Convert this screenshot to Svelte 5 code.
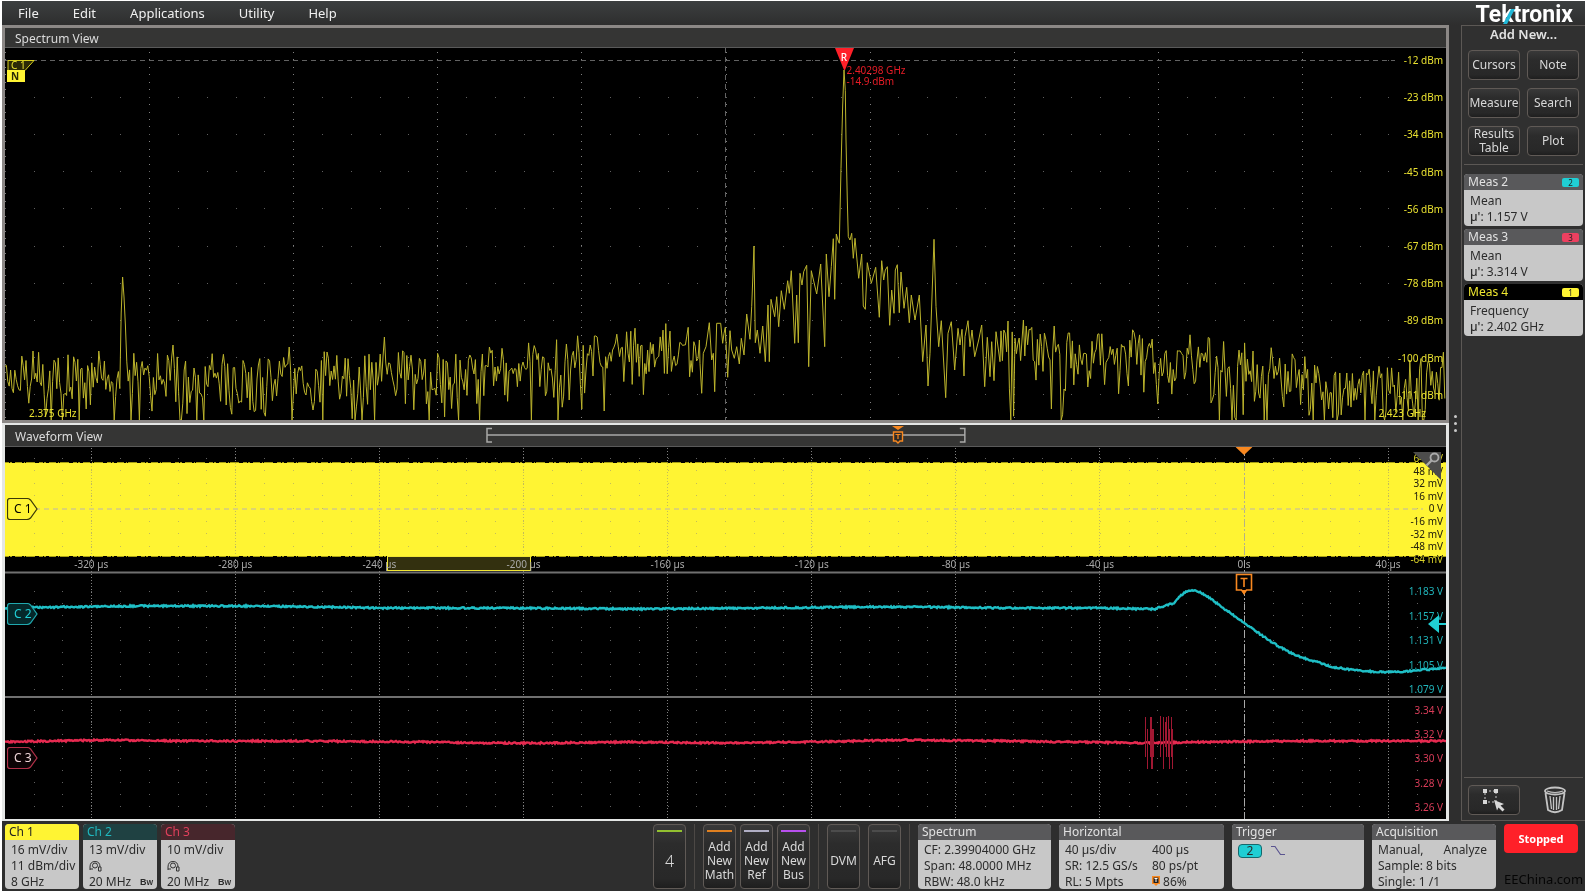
<script lang="ts">
	type Point = [number, number];

	const PLOT_W = 1441;
	const PLOT_H = 372;
	const DIV = 144.1;
	const ZERO_X = 1239;

	const menus = ['File', 'Edit', 'Applications', 'Utility', 'Help'];
	const tools = ['Cursors', 'Note', 'Measure', 'Search', 'Results Table', 'Plot'];

	const measurements = [
		{ title: 'Meas 2', source: '2', kind: 'Mean', value: '1.157 V', color: '#20ced4', active: false },
		{ title: 'Meas 3', source: '3', kind: 'Mean', value: '3.314 V', color: '#ee4060', active: false },
		{ title: 'Meas 4', source: '1', kind: 'Frequency', value: '2.402 GHz', color: '#fff433', active: true }
	];

	const channels = [
		{ name: 'Ch 1', tone: 'ch1', lines: ['16 mV/div', '11 dBm/div', '8 GHz'], probe: false },
		{ name: 'Ch 2', tone: 'ch2', lines: ['13 mV/div', '', '20 MHz'], probe: true },
		{ name: 'Ch 3', tone: 'ch3', lines: ['10 mV/div', '', '20 MHz'], probe: true }
	];

	const adders = [
		{ label: 'Add New Math', color: '#e08020' },
		{ label: 'Add New Ref', color: '#b0aec4' },
		{ label: 'Add New Bus', color: '#b850ee' }
	];

	const dbmLabels = Array.from({ length: 10 }, (_, i) => ({
		text: `${[-12, -23, -34, -45, -56, -67, -78, -89, -100, -111][i]} dBm`,
		y: 12 + i * 37.2
	}));

	const timeLabels = Array.from({ length: 10 }, (_, i) => {
		const t = -320 + i * 40;
		return { text: t === 0 ? '0 s' : `${t} µs`, x: ZERO_X + (t / 40) * DIV };
	});

	const ch1Labels = [64, 48, 32, 16, 0, -16, -32, -48, -64].map((v, i) => ({
		text: v === 0 ? '0 V' : `${v} mV`,
		y: 11 + i * 12.6
	}));
	const ch2Labels = ['1.183', '1.157', '1.131', '1.105', '1.079'].map((v, i) => ({
		text: `${v} V`,
		y: 144 + i * 24.5
	}));
	const ch3Labels = ['3.34', '3.32', '3.30', '3.28', '3.26'].map((v, i) => ({
		text: `${v} V`,
		y: 263 + i * 24.2
	}));

	const flags = [
		{ name: 'C 1', y: 62, color: '#3b3808', fill: '#fff433', text: '#000' },
		{ name: 'C 2', y: 167, color: '#20a8ae', fill: '#05282a', text: '#20ced4' },
		{ name: 'C 3', y: 311, color: '#b03048', fill: '#0c0305', text: '#f0d4d8' }
	];

	const bandRows = Array.from({ length: 7 }, (_, i) => 23.6 + i * 12.6);
	const laneRows = [
		11,
		...Array.from({ length: 9 }, (_, i) => 144 + i * 12.25),
		...Array.from({ length: 9 }, (_, i) => 263 + i * 12.1)
	];

	// Small seeded generator, so the noise is the same on each load
	function random(seed: number) {
		let s = seed;
		return () => {
			s = (s * 1664525 + 1013904223) % 4294967296;
			return (s + 1) / 4294967297;
		};
	}

	function level(points: Point[], x: number) {
		for (let i = 1; i < points.length; i++) {
			const [x0, y0] = points[i - 1];
			const [x1, y1] = points[i];
			if (x <= x1) return y0 + ((y1 - y0) * (x - x0)) / (x1 - x0);
		}
		return points[points.length - 1][1];
	}

	function toPath(points: Point[]) {
		return 'M' + points.map(([x, y]) => `${x.toFixed(1)} ${y.toFixed(1)}`).join('L');
	}

	// Carrier and its skirts, three units to a pixel from (695, -8)
	const carrier: Point[] = [
		[0, 970], [5, 1060], [10, 940], [18, 920], [28, 848], [35, 960], [40, 940], [44, 1055], [50, 850],
		[62, 850], [68, 910], [72, 880], [76, 862], [83, 1012], [90, 872], [95, 930], [103, 955], [110, 920],
		[118, 972], [124, 895], [132, 945], [140, 822], [150, 898], [155, 800], [162, 618], [166, 908],
		[172, 870], [180, 940], [188, 858], [196, 965], [204, 795], [208, 965], [213, 778], [224, 830],
		[230, 770], [236, 860], [244, 752], [253, 808], [263, 722], [268, 760], [274, 692], [284, 910],
		[290, 765], [295, 908], [300, 700], [306, 735], [311, 695], [320, 676], [326, 980], [334, 692],
		[350, 762], [362, 672], [374, 920], [379, 642], [387, 770], [394, 680], [400, 596], [404, 778],
		[409, 582], [414, 600], [418, 610], [423, 385], [428, 195], [432, 90], [436, 152], [438, 300],
		[442, 480], [445, 590], [450, 600], [455, 580], [460, 655], [465, 595], [476, 715], [485, 642],
		[490, 798], [496, 808], [502, 668], [514, 730], [527, 682], [538, 832], [545, 662], [551, 720],
		[556, 690], [562, 680], [569, 856], [575, 750], [582, 820], [586, 690], [592, 674], [598, 818],
		[603, 696], [612, 805], [620, 742], [628, 848], [634, 765], [645, 840], [658, 765], [668, 965],
		[678, 855], [684, 1038], [690, 940], [702, 598], [708, 800], [716, 920], [724, 842], [737, 1073],
		[744, 880], [754, 845], [764, 990], [774, 865], [780, 915], [786, 868], [792, 1008], [795, 890],
		[804, 842], [810, 920], [816, 870], [824, 950], [836, 900], [845, 855], [854, 1040], [862, 892],
		[870, 1010], [875, 905], [882, 1022], [888, 875], [900, 965]
	];

	const floor: Point[] = [
		[0, 328], [200, 330], [400, 323], [500, 316], [600, 306], [695, 296],
		[995, 292], [1080, 302], [1180, 310], [1260, 322], [1320, 338], [1441, 328]
	];

	const spurs: Point[] = [
		[28, 303], [94, 303], [118, 229], [168, 297], [284, 299], [379, 289],
		[484, 299], [590, 288], [1018, 272], [1049, 278], [1064, 285]
	];

	function spectrum() {
		const rnd = random(2402);
		const out: Point[] = [];
		const noise = (from: number, to: number) => {
			for (let x = from; x < to; x += 1.4) {
				const db = 10 * Math.log10(-Math.log(rnd()));
				let y = level(floor, x) - db * 3.8;
				y = Math.max(y, level(floor, x) - 24);
				for (const [px, py] of spurs) {
					const d = Math.abs(x - px);
					if (d < 0.8) y = py;
					else if (d < 2.5) y = Math.min(y, py + d * 20);
				}
				out.push([x, Math.min(y, PLOT_H)]);
			}
		};
		noise(0, 695);
		for (const [x, y] of carrier) out.push([695 + x / 3, y / 3 - 8]);
		noise(996, PLOT_W);
		return toPath(out);
	}

	function trace(points: Point[], seed: number) {
		const rnd = random(seed);
		const out: Point[] = [];
		for (let x = 0; x <= PLOT_W; x += 1) {
			out.push([x, level(points, x) + (rnd() - 0.5) * 1.6]);
		}
		return toPath(out);
	}

	const spectrumPath = spectrum();

	const ch2Path = trace(
		[
			[0, 161], [60, 160], [130, 159], [250, 159], [380, 161], [500, 161], [640, 162], [760, 161],
			[850, 160], [920, 160], [1000, 161], [1095, 161], [1138, 162], [1150, 162], [1162, 158], [1169, 156],
			[1175, 149], [1180, 145], [1187, 143], [1195, 145], [1205, 151], [1218, 161], [1228, 168], [1239, 176],
			[1255, 187], [1268, 196], [1282, 204], [1295, 210], [1312, 215], [1328, 220], [1348, 223],
			[1372, 225], [1395, 225], [1415, 223], [1441, 221]
		],
		7
	);

	const ch3Path = trace(
		[
			[0, 295], [50, 294], [100, 293], [180, 294], [300, 294], [420, 295], [480, 296], [540, 296], [620, 295],
			[720, 296], [800, 295], [900, 293], [1000, 294], [1140, 296], [1200, 295], [1300, 294], [1441, 294]
		],
		11
	);

	const bursts = [
		[1140, 270, 310], [1142, 282, 322], [1145, 270, 310], [1146, 270, 322], [1147, 282, 322],
		[1148, 282, 310], [1155, 269, 310], [1158, 270, 322], [1160, 275, 300], [1161, 270, 310],
		[1163, 269, 310], [1164, 282, 322], [1166, 270, 310], [1167, 282, 322]
	];

	const pctX = (x: number) => `${(x / PLOT_W) * 100}%`;
	const pctY = (y: number) => `${(y / PLOT_H) * 100}%`;
</script>

<div class="scope">
	<header class="menubar">
		<nav>
			{#each menus as item}
				<button class="menu">{item}</button>
			{/each}
		</nav>
		<div class="logo">
			Te<span class="logo-k">k<svg viewBox="0 0 12 16" aria-hidden="true"><path d="M0 16L8 1H12L4 16Z" fill="#20b8d8" /></svg></span>tronix
		</div>
	</header>

	<div class="workspace">
		<main>
			<section class="panel spectrum">
				<h2>Spectrum View</h2>
				<div class="plot">
					<svg class="graph" viewBox="0 0 {PLOT_W} {PLOT_H}" preserveAspectRatio="none" aria-hidden="true">
						<g class="grid">
							{#each Array(10) as _, i}
								<line class="sparse" x1={i * DIV + 0.5} x2={i * DIV + 0.5} y1="4" y2={PLOT_H} />
							{/each}
							{#each dbmLabels as row}
								<line class="row" x1="0" x2="1390" y1={row.y} y2={row.y} />
							{/each}
							<line class="dash" x1="0" x2="1390" y1="12" y2="12" />
							<line class="dash" x1="720.5" x2="720.5" y1="0" y2={PLOT_H} />
						</g>
						<path class="spectrum-line" d={spectrumPath} />
					</svg>
					{#each dbmLabels as label}
						<span class="tick right yellow" style="top: {pctY(label.y)}">{label.text}</span>
					{/each}
					<span class="freq start">2.375 GHz</span>
					<span class="freq end">2.423 GHz</span>
					<div class="ref-badge">
						<svg width="28" height="22" viewBox="0 0 28 22" aria-hidden="true">
							<path d="M1 0.5H27L18 10.5H1Z" fill="#2c2a06" stroke="#d8d020" />
							<path d="M0 10H18V22H0Z" fill="#fff433" />
						</svg>
						<span class="ref-c">C 1</span>
						<span class="ref-n">N</span>
					</div>
					<div class="peak" style="left: {pctX(839.5)}">
						<svg width="19" height="22" viewBox="0 0 19 22" aria-hidden="true">
							<path d="M0 0H19L10 22H9Z" fill="#ff2029" />
						</svg>
						<b>R</b>
						<p>2.40298 GHz<br />-14.9 dBm</p>
					</div>
				</div>
			</section>

			<section class="panel waveform">
				<h2>Waveform View</h2>
				<div class="overview">
					<svg viewBox="0 0 480 20" preserveAspectRatio="none" aria-hidden="true">
						<path d="M6 3.5H1V17H6M1 10H479M474 3.5H479V17H474" fill="none" stroke="#a8a8a6" stroke-width="1.5" />
					</svg>
					<svg class="overview-t" width="12" height="18" viewBox="0 0 12 18" aria-hidden="true">
						<path d="M0 0H12L6 4Z" fill="#f88820" />
						<path d="M1.5 6H10.5V15H8L6 17L4 15H1.5Z" fill="#2c2a28" stroke="#f88820" stroke-width="1.4" />
						<path d="M3.5 8.5H8.5M6 8.5V13" stroke="#f88820" stroke-width="1.2" />
					</svg>
				</div>
				<div class="plot">
					<svg class="graph" viewBox="0 0 {PLOT_W} {PLOT_H}" preserveAspectRatio="none" aria-hidden="true">
						<g class="grid">
							{#each timeLabels as t}
								<line class="dense" class:trigger={t.text === '0 s'} x1={t.x} x2={t.x} y1="1" y2={PLOT_H} />
							{/each}
							{#each laneRows as y}
								<line class="row" x1="28.5" x2={PLOT_W} y1={y} y2={y} />
							{/each}
						</g>
						<rect class="band" x="0" y="16" width={PLOT_W} height="93" />
						<line class="fuzz" x1="0" x2={PLOT_W} y1="15.5" y2="15.5" />
						<line class="fuzz" x1="0" x2={PLOT_W} y1="109.5" y2="109.5" />
						<g class="grid on-band">
							{#each timeLabels as t}
								<line class="dense" class:trigger={t.text === '0 s'} x1={t.x} x2={t.x} y1="16" y2="109" />
							{/each}
							{#each bandRows as y}
								<line class="row" x1="28.5" x2={PLOT_W} y1={y} y2={y} />
							{/each}
							<line class="zero" x1="30" x2="1418" y1="61.5" y2="61.5" />
						</g>
						<path class="divider" d="M0 125.5H{PLOT_W}M0 250H{PLOT_W}" />
						<rect class="window" x="382.5" y="109.5" width="143" height="14" />
						<path class="trace cyan-line" d={ch2Path} />
						<path class="trace red-line" d={ch3Path} />
						{#each bursts as [x, top, bottom]}
							<line class="burst" x1={x + 0.5} x2={x + 0.5} y1={top} y2={bottom} />
						{/each}
					</svg>

					{#each timeLabels as label}
						<span class="tick time" style="left: {pctX(label.x)}; top: {pctY(117)}">{label.text}</span>
					{/each}
					{#each ch1Labels as label}
						<span class="tick right invert" style="top: {pctY(label.y)}">{label.text}</span>
					{/each}
					{#each ch2Labels as label}
						<span class="tick right cyan" style="top: {pctY(label.y)}">{label.text}</span>
					{/each}
					{#each ch3Labels as label}
						<span class="tick right red" style="top: {pctY(label.y)}">{label.text}</span>
					{/each}

					{#each flags as flag}
						<div class="flag" style="top: {pctY(flag.y)}; color: {flag.text}">
							<svg width="31" height="22" viewBox="0 0 31 22" aria-hidden="true">
								<path
									d="M3 0.5H20Q22 0.5 23.5 2L30 11L23.5 20Q22 21.5 20 21.5H3Q0.5 21.5 0.5 19V3Q0.5 0.5 3 0.5Z"
									fill={flag.fill}
									stroke={flag.color}
									stroke-width="1.2"
								/>
							</svg>
							<span>{flag.name}</span>
						</div>
					{/each}

					<svg class="marker trig-top" style="left: {pctX(ZERO_X)}" width="17" height="8" viewBox="0 0 17 8" aria-hidden="true">
						<path d="M0 0H17L8.5 8Z" fill="#f88820" />
					</svg>
					<svg class="marker" style="left: {pctX(ZERO_X)}; top: {pctY(126)}" width="18" height="23" viewBox="0 0 18 23" aria-hidden="true">
						<path d="M1.5 1.5H16.5V17H11.5L9 20L6.5 17H1.5Z" fill="#000" stroke="#f88820" stroke-width="1.6" />
						<path d="M6 17H12L9 22Z" fill="#f88820" />
						<path d="M5.5 5.5H12.5M9 5.5V14" stroke="#f88820" stroke-width="1.6" />
					</svg>
					<svg class="level" style="top: {pctY(177)}" width="18" height="18" viewBox="0 0 18 18" aria-hidden="true">
						<path d="M0 9L11 0V8H18V10H11V18Z" fill="#20ced4" />
					</svg>
					<button class="zoom" aria-label="Zoom">
						<svg width="30" height="30" viewBox="0 0 30 30" aria-hidden="true">
							<path d="M1 1H29V29Z" fill="#4c4c4b" />
							<circle cx="22.5" cy="6.5" r="4" fill="none" stroke="#a9a9a9" stroke-width="1.8" />
							<path d="M19.5 9.5L14.5 14.5" stroke="#a9a9a9" stroke-width="2.4" />
						</svg>
					</button>
				</div>
			</section>
		</main>

		<div class="splitter"><i></i><i></i><i></i></div>

		<aside>
			<h3>Add New...</h3>
			<div class="tools">
				{#each tools as tool}
					<button class="key">{tool}</button>
				{/each}
			</div>
			<div class="measurements">
				{#each measurements as m}
					<article class="card">
						<h4 class:active={m.active}>{m.title}<span class="source" style="background: {m.color}">{m.source}</span></h4>
						<div class="card-body">
							<p>{m.kind}</p>
							<p><b class="mu">µ'</b>: {m.value}</p>
						</div>
					</article>
				{/each}
			</div>
			<div class="actions">
				<button class="key" aria-label="Draw a box">
					<svg width="24" height="24" viewBox="0 0 24 24" aria-hidden="true">
						<path d="M3 3H14V14H3Z" fill="none" stroke="#c8c8c8" stroke-dasharray="2 2" />
						<path d="M1 1H5V5H1ZM12 1H16V5H12ZM1 12H5V16H1Z" fill="#d8d8d8" />
						<path d="M12 12L22 16L18.5 17.5L22.5 21.5L20.5 23.5L16.5 19.5L15 22.5Z" fill="#d8d8d8" />
					</svg>
				</button>
				<button class="trash" aria-label="Delete">
					<svg width="24" height="28" viewBox="0 0 24 28" fill="none" stroke="#c4c4c4" aria-hidden="true">
						<ellipse cx="12" cy="5" rx="10" ry="3.5" stroke-width="1.8" />
						<path d="M4 5Q12 8 20 5" stroke-width="1.2" />
						<path d="M2.5 7L5 24Q12 28.5 19 24L21.5 7" stroke-width="1.8" />
						<path d="M7 10L8.5 23M10.5 11V24M13.5 11V24M17 10L15.5 23" stroke-width="1.3" />
					</svg>
				</button>
			</div>
		</aside>
	</div>

	<footer>
		<div class="channels">
			{#each channels as ch}
				<article class="card channel {ch.tone}">
					<h4>{ch.name}</h4>
					<div class="card-body">
						{#each ch.lines as line, i}
							<p>
								{#if line}
									{line}
								{:else}
									<svg width="13" height="12" viewBox="0 0 13 12" fill="none" stroke="#333" aria-hidden="true">
										<path d="M1 10V7Q1 1.5 6 1.5Q11 1.5 11 7" />
										<circle cx="6" cy="5.5" r="2.5" />
										<path d="M1 9H4M9.5 7H12V11H9.5Z" />
									</svg>
								{/if}
								{#if ch.probe && i === 2}<b class="bw">B<small>W</small></b>{/if}
							</p>
						{/each}
					</div>
				</article>
			{/each}
		</div>

		<div class="controls">
			<button class="key tall"><i style="background: #92c030"></i><span class="big">4</span></button>
			<hr />
			<div class="adders">
				{#each adders as adder}
					<button class="key tall"><i style="background: {adder.color}"></i><span>{adder.label}</span></button>
				{/each}
			</div>
			<hr />
			<button class="key tall"><i></i><span>DVM</span></button>
			<button class="key tall"><i></i><span>AFG</span></button>
			<hr />
			<article class="card spectrum-card">
				<h4>Spectrum</h4>
				<div class="card-body">
					<p>CF: 2.39904000 GHz</p>
					<p>Span: 48.0000 MHz</p>
					<p>RBW: 48.0 kHz</p>
				</div>
			</article>
			<article class="card horizontal-card">
				<h4>Horizontal</h4>
				<div class="card-body two-col">
					<p>40 µs/div</p>
					<p>400 µs</p>
					<p>SR: 12.5 GS/s</p>
					<p>80 ps/pt</p>
					<p>RL: 5 Mpts</p>
					<p>
						<svg width="8" height="10" viewBox="0 0 8 10" aria-hidden="true">
							<path d="M0 0H8V8H6L4 10L2 8H0Z" fill="#f88820" />
							<path d="M1.5 1.5H6.5V7H1.5Z" fill="#222" />
							<path d="M2.5 2.5H5.5M4 2.5V6" stroke="#fff" />
						</svg>
						86%
					</p>
				</div>
			</article>
			<article class="card trigger-card">
				<h4>Trigger</h4>
				<div class="card-body trigger-row">
					<span class="trigger-source">2</span>
					<svg width="14" height="12" viewBox="0 0 14 12" aria-hidden="true">
						<path d="M0 1.5H4L9.5 9.5H14" fill="none" stroke="#5a5490" stroke-width="1.2" />
					</svg>
				</div>
			</article>
			<article class="card acquisition-card">
				<h4>Acquisition</h4>
				<div class="card-body">
					<p class="spread"><span>Manual,</span><span>Analyze</span></p>
					<p>Sample: 8 bits</p>
					<p>Single: 1 /1</p>
				</div>
			</article>
			<div class="status">
				<button class="stopped">Stopped</button>
				<span class="credit">EEChina.com</span>
			</div>
		</div>
	</footer>
</div>

<style>
	:global(body) {
		margin: 0;
		background: #2e2e2e;
	}

	.scope {
		display: flex;
		flex-direction: column;
		box-sizing: border-box;
		min-height: 100vh;
		border: 1px solid #fff;
		border-left-width: 2px;
		background: #2e2e2e;
		color: #e2e2e2;
		font-family: 'Noto Sans', 'Open Sans', sans-serif;
		font-size: 12px;
		line-height: 16px;
	}

	h2,
	h3,
	h4,
	p {
		margin: 0;
		font-weight: 400;
	}

	button {
		margin: 0;
		padding: 0;
		border: 0;
		background: none;
		color: inherit;
		font: inherit;
		cursor: pointer;
	}

	svg {
		display: block;
	}

	.menubar {
		display: flex;
		justify-content: space-between;
		height: 24px;
		padding-right: 12px;
		background: linear-gradient(#3c3f40, #2e2e2e);
	}

	nav {
		display: flex;
		gap: 34px;
		padding-left: 16px;
	}

	.menu {
		color: #f0f0f0;
		font-size: 13px;
		line-height: 24px;
	}

	.logo {
		color: #fff;
		font-family: Roboto, sans-serif;
		font-size: 23px;
		font-weight: 700;
		line-height: 28px;
	}

	.logo-k {
		position: relative;
	}

	.logo-k svg {
		position: absolute;
		left: 2px;
		bottom: 4px;
		width: 12px;
		height: 16px;
	}

	.workspace {
		display: grid;
		grid-template-columns: minmax(0, 1fr) 12px 124px;
		flex: 1;
	}

	main {
		display: grid;
		grid-template-rows: 1fr 1fr;
	}

	.panel {
		position: relative;
		display: flex;
		flex-direction: column;
		min-height: 240px;
		border: 3px solid #8c8886;
		background: #000;
	}

	.waveform {
		border-color: #e4e6e5;
		border-width: 2px 3px;
	}

	h2 {
		height: 19px;
		padding-left: 10px;
		border-bottom: 1px solid #5a5a5a;
		background: #353534;
		color: #dcdcdc;
		font-size: 12px;
		line-height: 21px;
	}

	.waveform h2 {
		height: 21px;
		line-height: 24px;
	}

	.plot {
		position: relative;
		flex: 1;
		overflow: hidden;
	}

	.graph {
		position: absolute;
		width: 100%;
		height: 100%;
	}

	.grid line {
		stroke: #707070;
		shape-rendering: crispEdges;
	}

	.grid .sparse {
		stroke: #808080;
		stroke-dasharray: 1 6.44;
	}

	.grid .row {
		stroke: #606060;
		stroke-dasharray: 1 27.82;
	}

	.grid .dense {
		stroke: #808080;
		stroke-dasharray: 1 2;
	}

	.grid .trigger {
		stroke: #a8a8a8;
		stroke-dasharray: 8 2 2 2;
	}

	.grid .dash {
		stroke: #626262;
		stroke-dasharray: 5 4;
	}

	.on-band .dense,
	.on-band .row {
		stroke: #c4bc58;
	}

	.on-band .trigger {
		stroke: #b4b08c;
	}

	.on-band .zero {
		stroke: #ddd470;
		stroke-dasharray: 5 4;
		stroke-width: 2;
	}

	.spectrum-line {
		fill: none;
		stroke: #bcb42c;
		stroke-width: 1;
	}

	.band {
		fill: #fff433;
	}

	.fuzz {
		stroke: #a8a012;
		stroke-dasharray: 4 1 2 3 7 2 1 1 9 4;
	}

	.window {
		fill: #33300f;
		stroke: #f0e634;
	}

	.divider {
		fill: none;
		stroke: #707070;
		stroke-width: 2;
	}

	.trace {
		fill: none;
		stroke-width: 2.4;
	}

	.cyan-line {
		stroke: #1fbfc6;
	}

	.red-line {
		stroke: #e62a50;
	}

	.burst {
		stroke: #a01832;
		shape-rendering: crispEdges;
	}

	.tick,
	.freq {
		position: absolute;
		font-size: 10px;
		line-height: 12px;
		white-space: nowrap;
	}

	.tick {
		transform: translateY(-50%);
	}

	.right {
		right: 3px;
	}

	.time {
		color: #a8a8a8;
		transform: translate(-50%, -50%);
	}

	.yellow,
	.freq {
		color: #e8e030;
	}

	.cyan {
		color: #20b4ba;
	}

	.red {
		color: #d83c58;
	}

	/* Yellow on the dark ground, near black where the trace lies under it */
	.invert {
		color: #d8d028;
		mix-blend-mode: difference;
	}

	.start {
		bottom: 1px;
		left: 24px;
	}

	.end {
		right: 20px;
		bottom: 1px;
	}

	.ref-badge {
		position: absolute;
		top: 12px;
		left: 2px;
		width: 28px;
		height: 22px;
		font-size: 10px;
		line-height: 10px;
	}

	.ref-badge span {
		position: absolute;
		left: 4px;
	}

	.ref-c {
		top: 0;
		color: #e8e030;
	}

	.ref-n {
		top: 11px;
		color: #2c2a06;
		font-weight: 700;
	}

	.peak {
		position: absolute;
		top: 0;
		width: 19px;
		margin-left: -10px;
		font-size: 10px;
	}

	.peak b {
		position: absolute;
		top: 1px;
		left: 0;
		width: 19px;
		color: #fff;
		font-weight: 500;
		text-align: center;
	}

	.peak p {
		position: absolute;
		top: 17px;
		left: 12px;
		color: #e81c26;
		line-height: 11px;
		white-space: nowrap;
	}

	.overview {
		position: absolute;
		top: 0;
		left: 33.4%;
		width: 33.3%;
		height: 20px;
	}

	.overview svg {
		width: 100%;
		height: 20px;
	}

	.overview .overview-t {
		position: absolute;
		top: 1px;
		left: 84.6%;
		width: 12px;
		height: 18px;
	}

	.flag {
		position: absolute;
		left: 2px;
		width: 31px;
		height: 22px;
		transform: translateY(-50%);
	}

	.flag span {
		position: absolute;
		top: 3px;
		left: 7px;
	}

	.marker {
		position: absolute;
		transform: translateX(-50%);
	}

	.trig-top {
		top: 0;
	}

	.level {
		position: absolute;
		right: 0;
		transform: translateY(-50%);
	}

	.zoom {
		position: absolute;
		top: 4px;
		right: 4px;
	}

	.splitter {
		display: flex;
		flex-direction: column;
		align-items: center;
		justify-content: center;
		gap: 4px;
	}

	.splitter i {
		width: 3px;
		height: 3px;
		border-radius: 50%;
		background: #c8c8c8;
	}

	aside {
		display: flex;
		flex-direction: column;
		border: 1px solid #5c5855;
		border-right: 0;
		background: #303030;
	}

	h3 {
		padding-bottom: 8px;
		font-size: 13px;
		font-weight: 600;
		line-height: 16px;
		text-align: center;
	}

	.tools {
		display: grid;
		grid-template-columns: 1fr 1fr;
		gap: 8px 7px;
		margin: 0 2px;
		padding: 0 4px 8px;
		border-bottom: 1px solid #5c5855;
	}

	.key {
		height: 30px;
		border: 1px solid #605a56;
		border-radius: 4px;
		background: linear-gradient(#393939, #2c2c2c 30%, #282828 85%, #1e1e1e);
		color: #d8d8d8;
		line-height: 14px;
	}

	.measurements {
		display: grid;
		gap: 3px;
		flex: 1;
		align-content: start;
		padding: 9px 2px;
	}

	.card {
		overflow: hidden;
		border-radius: 4px;
		background: #c8c8c8;
		color: #2c2c2c;
	}

	h4 {
		padding: 0 4px;
		background: #59595b;
		color: #e2e2e2;
		font-size: 12px;
		line-height: 16px;
	}

	.card-body {
		padding: 3px 6px 1px;
		font-weight: 300;
	}

	.card-body p {
		white-space: nowrap;
	}

	.measurements h4 {
		display: flex;
		align-items: center;
		justify-content: space-between;
	}

	.measurements .active {
		background: #000;
		color: #f0e830;
	}

	.source {
		width: 17px;
		border-radius: 2px;
		color: #222;
		font-size: 8px;
		line-height: 9px;
		text-align: center;
	}

	.mu {
		font-weight: 500;
	}

	.actions {
		display: flex;
		align-items: center;
		justify-content: space-between;
		margin: 0 2px;
		padding: 7px 16px 5px 4px;
		border-top: 1px solid #5c5855;
	}

	.actions .key {
		display: flex;
		align-items: center;
		justify-content: center;
		width: 52px;
	}

	footer {
		display: flex;
		justify-content: space-between;
		gap: 16px;
		padding: 3px 7px 2px 3px;
	}

	.channels,
	.controls,
	.adders {
		display: flex;
		gap: 4px;
	}

	.controls {
		gap: 8px;
	}

	footer .card {
		height: 65px;
	}

	footer .card-body {
		padding: 2px 6px 0;
	}

	.channel {
		width: 74px;
	}

	.channel p {
		display: flex;
		align-items: center;
		justify-content: space-between;
		height: 16px;
	}

	.channel .card-body {
		padding-right: 4px;
	}

	.ch1 h4 {
		background: #fff433;
		color: #222;
	}

	.ch2 h4 {
		background: #1f4142;
		color: #20b8be;
	}

	.ch3 h4 {
		background: #47262c;
		color: #e0405c;
	}

	.bw {
		font-family: 'Liberation Sans', sans-serif;
		font-size: 9px;
		font-weight: 700;
	}

	.bw small {
		font-size: 7px;
	}

	hr {
		width: 1px;
		margin: 0;
		border: 0;
		background: #4c4845;
	}

	.tall {
		position: relative;
		width: 33px;
		height: 65px;
	}

	.tall i {
		position: absolute;
		top: 5px;
		right: 3px;
		left: 3px;
		height: 2px;
		background: #4c4c4c;
	}

	.tall span {
		display: block;
		padding-top: 8px;
	}

	.tall .big {
		font-size: 16px;
		font-weight: 300;
	}

	.spectrum-card {
		width: 133px;
	}

	.horizontal-card {
		width: 165px;
	}

	.trigger-card {
		width: 132px;
	}

	.acquisition-card {
		width: 124px;
	}

	.two-col {
		display: grid;
		grid-template-columns: 87px 1fr;
	}

	.two-col svg {
		display: inline-block;
	}

	.trigger-row {
		display: flex;
		align-items: center;
		gap: 9px;
	}

	footer .trigger-row {
		padding-top: 4px;
	}

	.trigger-source {
		width: 22px;
		border: 1px solid #14686c;
		border-radius: 4px;
		background: #20ced4;
		font-weight: 400;
		line-height: 12px;
		text-align: center;
	}

	.spread {
		display: flex;
		justify-content: space-between;
	}

	.acquisition-card .card-body {
		padding-right: 9px;
	}

	.status {
		display: flex;
		flex-direction: column;
		justify-content: space-between;
		width: 74px;
	}

	.stopped {
		height: 29px;
		border-radius: 4px;
		background: #ff2029;
		color: #fff;
		font-size: 11px;
		font-weight: 700;
	}

	.credit {
		color: #050505;
		font-size: 13px;
		line-height: 20px;
	}
</style>
